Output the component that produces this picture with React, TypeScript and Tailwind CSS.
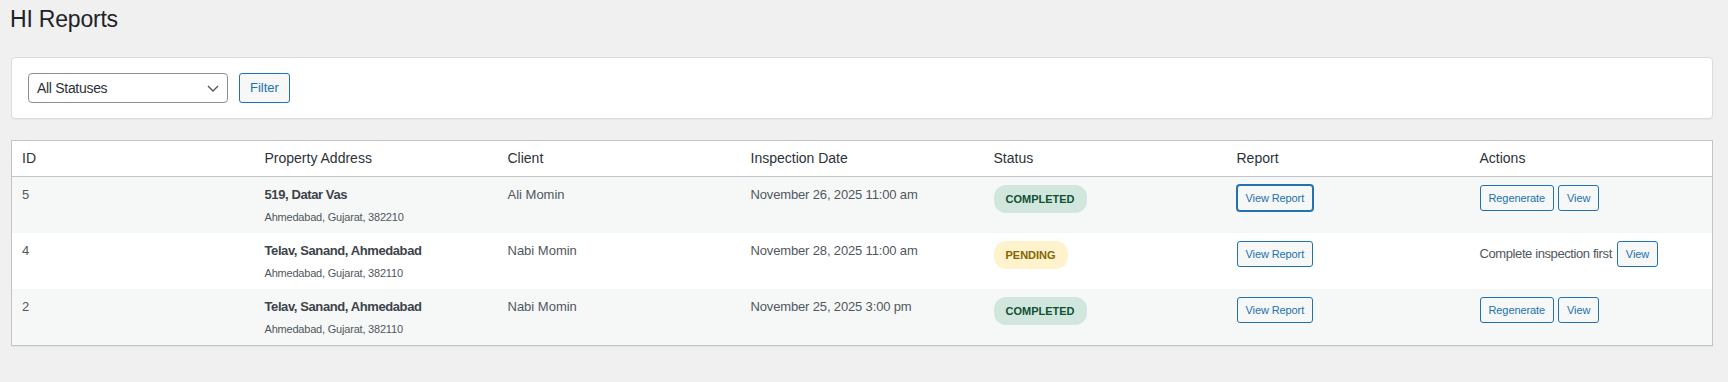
import React from "react";

type Row = {
  id: number;
  street: string;
  city: string;
  client: string;
  date: string;
  status: "completed" | "pending";
  focused?: boolean;
};

const rows: Row[] = [
  {
    id: 5,
    street: "519, Datar Vas",
    city: "Ahmedabad, Gujarat, 382210",
    client: "Ali Momin",
    date: "November 26, 2025 11:00 am",
    status: "completed",
    focused: true,
  },
  {
    id: 4,
    street: "Telav, Sanand, Ahmedabad",
    city: "Ahmedabad, Gujarat, 382110",
    client: "Nabi Momin",
    date: "November 28, 2025 11:00 am",
    status: "pending",
  },
  {
    id: 2,
    street: "Telav, Sanand, Ahmedabad",
    city: "Ahmedabad, Gujarat, 382110",
    client: "Nabi Momin",
    date: "November 25, 2025 3:00 pm",
    status: "completed",
  },
];

const SmallButton = ({ children, focused }: { children: React.ReactNode; focused?: boolean }) => {
  return (
    <button
      className={
        "inline-flex items-center h-[26px] px-2 text-[11px] leading-[24px] tracking-[-0.1px] text-[#2271b1] bg-[#f6f7f7] border border-[#2271b1] rounded-[3px] whitespace-nowrap " +
        (focused ? "ring-1 ring-[#2271b1]" : "")
      }
    >
      {children}
    </button>
  );
};

const StatusBadge = ({ status }: { status: Row["status"] }) => {
  if (status === "pending") {
    return (
      <span className="inline-block px-3 py-[6px] text-[11px] leading-[16px] font-bold rounded-xl bg-[#fff3cd] text-[#856404]">
        PENDING
      </span>
    );
  }
  return (
    <span className="inline-block px-3 py-[6px] text-[11px] leading-[16px] font-bold rounded-xl bg-[#d1e7dd] text-[#0f5132]">
      COMPLETED
    </span>
  );
};

export default function App() {
  const headers = ["ID", "Property Address", "Client", "Inspection Date", "Status", "Report", "Actions"];

  return (
    <div className="min-h-screen bg-[#f0f0f1] text-[#3c434a] font-['Liberation_Sans',Arial,sans-serif] pl-[11px] pr-[15px]">
      <h1 className="pt-[4px] -ml-px text-[23px] leading-[30px] font-normal tracking-[-0.2px] text-[#1d2327]">HI Reports</h1>

      {/* filter box */}
      <div className="mt-[23px] bg-white border border-[#dcdcde] rounded-[4px] shadow-[0_1px_1px_rgba(0,0,0,0.04)] px-4 py-[15px] flex items-center gap-[11px]">
        <div className="w-[200px] h-[30px] border border-[#8c8f94] rounded-[4px] bg-white flex items-center justify-between pl-2 pr-[8px]">
          <span className="text-[14px] tracking-[-0.3px] text-[#2c3338]">All Statuses</span>
          <svg width="12" height="7" viewBox="0 0 12 7" fill="none">
            <path d="M1 1l5 5 5-5" stroke="#50575e" strokeWidth="1.4" />
          </svg>
        </div>
        <button className="h-[30px] px-[10px] text-[13px] text-[#2271b1] bg-[#f6f7f7] border border-[#2271b1] rounded-[3px]">
          Filter
        </button>
      </div>

      {/* reports table */}
      <table className="mt-[21px] w-full table-fixed border-collapse border border-[#c3c4c7] bg-white shadow-[0_1px_1px_rgba(0,0,0,0.04)]">
        <thead>
          <tr className="border-b border-[#c3c4c7]">
            {headers.map((h) => (
              <th
                key={h}
                className="text-left font-normal text-[14px] leading-[19px] py-2 pl-[10px] pr-[10px] text-[#2c3338]"
              >
                {h}
              </th>
            ))}
          </tr>
        </thead>
        <tbody>
          {rows.map((r, index) => (
            <tr key={r.id} className={index % 2 === 0 ? "bg-[#f6f7f7]" : "bg-white"}>
              <td className="align-top py-2 px-[10px] text-[13px] leading-[19.5px] text-[#50575e]">{r.id}</td>
              <td className="align-top py-2 px-[10px] text-[#50575e]">
                <div className="text-[13px] leading-[19.5px] font-bold tracking-[-0.4px] text-[#3c434a]">{r.street}</div>
                <div className="mt-1 text-[11px] leading-[16.5px] tracking-[-0.2px]">{r.city}</div>
              </td>
              <td className="align-top py-2 px-[10px] text-[13px] leading-[19.5px] text-[#50575e]">{r.client}</td>
              <td className="align-top py-2 px-[10px] text-[13px] leading-[19.5px] tracking-[-0.15px] text-[#50575e]">{r.date}</td>
              <td className="align-top py-2 px-[10px]">
                <StatusBadge status={r.status} />
              </td>
              <td className="align-top py-2 px-[10px]">
                <SmallButton focused={r.focused}>View Report</SmallButton>
              </td>
              <td className="align-top py-2 px-[10px]">
                {r.status === "completed" ? (
                  <div className="flex items-center gap-1">
                    <SmallButton>Regenerate</SmallButton>
                    <SmallButton>View</SmallButton>
                  </div>
                ) : (
                  <div className="flex items-baseline gap-[5px]">
                    <span className="text-[13px] leading-[19.5px] tracking-[-0.4px] text-[#50575e] whitespace-nowrap">
                      Complete inspection first
                    </span>
                    <SmallButton>View</SmallButton>
                  </div>
                )}
              </td>
            </tr>
          ))}
        </tbody>
      </table>
    </div>
  );
}
